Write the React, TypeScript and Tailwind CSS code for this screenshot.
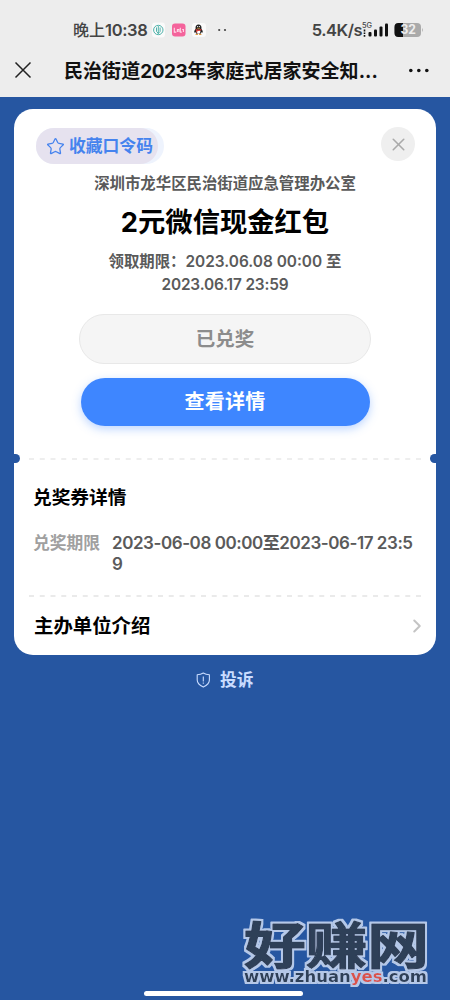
import { ChevronRight, Star, X } from 'lucide-react';

function StatusBar() {
  return (
    <div className="flex h-[60px] items-center pl-[73px] pr-[26px] text-[#444]">
      <span className="w-[75px] whitespace-nowrap text-base font-medium leading-[60px]">
        晚上<span className="text-[16.5px] font-semibold tracking-[-0.35px]">10:38</span>
      </span>
      <svg className="ml-1" width="54" height="16" viewBox="0 0 54 16">
        <rect x="0" y="0.5" width="13" height="15" rx="3" fill="#fafafa" />
        <circle cx="6.3" cy="8" r="4.7" fill="none" stroke="#4fb3ab" strokeWidth="1" />
        <path d="M6.3 4v8M4.5 5.5v4l1.8 1.8 1.8-1.8v-4" fill="none" stroke="#4fb3ab" strokeWidth="1" />
        <rect x="20" y="1.5" width="13.5" height="13" rx="3" fill="#f4639b" />
        <path d="M22.3 5.8v4.3h2M25.4 10.1V7.5h1.5v2.6M28.3 5.8v4.3h1.5M31.4 10.1V7.5h-1.2" fill="none" stroke="#ffd9e8" strokeWidth="1.1" />
        <rect x="40" y="1" width="14" height="14" rx="3" fill="#fafafa" />
        <ellipse cx="46.5" cy="6" rx="3" ry="3.5" fill="#222" />
        <path d="M43.5 7c-1.4 1.6-1.6 3.3-.8 3.7l.8-.6c.2 1 .6 1.4 1 1.7h4c.4-.3.8-.7 1-1.7l.8.6c.8-.4.6-2.1-.8-3.7z" fill="#222" />
        <ellipse cx="46.5" cy="9.7" rx="1.9" ry="2" fill="#fff" />
        <path d="M43.6 7.5q2.9 1.7 5.8 0M44.8 8v2.6" fill="none" stroke="#dc3b36" strokeWidth="1.2" />
        <path d="M43.6 12.4h2.4M47 12.4h2.4" stroke="#d98b2b" strokeWidth="1" />
        <path d="M45.2 6.3h2.6" stroke="#e7a03a" strokeWidth="0.8" />
        <circle cx="45.6" cy="4.6" r="0.6" fill="#fff" />
        <circle cx="47.4" cy="4.6" r="0.6" fill="#fff" />
      </svg>
      <svg className="ml-3" width="10" height="4" viewBox="0 0 10 4">
        <circle cx="1.2" cy="2" r="1.1" fill="#444" />
        <circle cx="7" cy="2" r="1.1" fill="#444" />
      </svg>
      <span className="ml-auto whitespace-nowrap text-[16.5px] font-semibold leading-[60px] tracking-[-0.5px]">5.4K/s</span>
      <svg width="28" height="16" viewBox="0 0 28 16">
        <text x="0" y="5.8" fontSize="7" fontWeight="500" fill="#444" textLength="10" lengthAdjust="spacingAndGlyphs">5G</text>
        <path d="M2.5 7.5v2M2.5 10.5v1.6M2.5 13v1.8" stroke="#111" strokeWidth="1.6" />
        <rect x="6.5" y="10" width="3" height="4.5" rx="1" fill="#111" />
        <rect x="12" y="7.5" width="3" height="7" rx="1" fill="#111" />
        <rect x="17.5" y="4.5" width="3" height="10" rx="1" fill="#111" />
        <rect x="23" y="1.5" width="3" height="13" rx="1" fill="#111" />
      </svg>
      <svg className="ml-1" width="30" height="16" viewBox="0 0 30 16">
        <rect x="0.5" y="1" width="26.5" height="14" rx="4" fill="#aaa" />
        <path d="M4.5 1H9v14H4.5a4 4 0 0 1-4-4V5a4 4 0 0 1 4-4z" fill="#111" />
        <path d="M28 5.7q1.8 2.3 0 4.6z" fill="#aaa" />
        <text x="6.5" y="12.4" fontSize="12.5" fontWeight="700" fill="#eee" textLength="15.5" lengthAdjust="spacingAndGlyphs">32</text>
      </svg>
    </div>
  );
}

function TitleBar() {
  return (
    <div className="flex h-[37px] items-center pb-[17px]">
      <svg className="ml-[14px] shrink-0" width="18" height="18" viewBox="0 0 18 18">
        <path d="M1.5 1.5l15 15M16.5 1.5l-15 15" stroke="#222" strokeWidth="1.5" />
      </svg>
      <h1 className="ml-8 w-[316px] whitespace-nowrap pt-[3px] text-[19px] font-bold leading-5 tracking-[0.05px] text-[#111]">
        民治街道<span className="tracking-[-0.5px]">2023</span>年家庭式居家安全知...
      </h1>
      <svg className="ml-[29px] shrink-0" width="21" height="5" viewBox="0 0 21 5">
        <circle cx="1.8" cy="2.5" r="1.8" fill="#111" />
        <circle cx="9.8" cy="2.5" r="1.8" fill="#111" />
        <circle cx="17.8" cy="2.5" r="1.8" fill="#111" />
      </svg>
    </div>
  );
}

function DashedLine({ color }: { color: string }) {
  return (
    <svg className="block" width="392" height="2" viewBox="0 0 392 2">
      <path d="M0 1h392" stroke={color} strokeWidth="1.4" strokeDasharray="5 5.75" />
    </svg>
  );
}

function Watermark() {
  return (
    <svg className="absolute bottom-0 right-0" width="220" height="110" viewBox="0 0 220 110">
      <defs>
        <filter id="outline" x="-5%" y="-10%" width="110%" height="120%">
          <feMorphology in="SourceAlpha" operator="dilate" radius="1.5" result="thick" />
          <feFlood floodColor="#b5c8e8" />
          <feComposite in2="thick" operator="in" result="edge" />
          <feMerge>
            <feMergeNode in="edge" />
            <feMergeNode in="SourceGraphic" />
          </feMerge>
        </filter>
      </defs>
      <text
        x="14"
        y="74"
        textLength="185"
        lengthAdjust="spacingAndGlyphs"
        fontFamily="Noto Sans CJK SC, sans-serif"
        fontSize="50"
        fontWeight="700"
        fill="#2e3f58"
        stroke="#2e3f58"
        strokeWidth="1.2"
        strokeLinejoin="round"
        filter="url(#outline)"
      >
        好赚网
      </text>
      <text
        x="14"
        y="91.5"
        textLength="183"
        lengthAdjust="spacingAndGlyphs"
        fontFamily="DejaVu Sans, sans-serif"
        fontSize="15"
        fontWeight="700"
        fill="#2e3f58"
        filter="url(#outline)"
      >
        www.zhuan<tspan fill="#d9534c">yes</tspan>.com
      </text>
    </svg>
  );
}

export default function App() {
  return (
    <div className="relative flex h-[1000px] w-[450px] flex-col overflow-hidden bg-[#2656a1] font-['Inter','Noto_Sans_CJK_SC',sans-serif]">
      <header className="h-[97px] shrink-0 bg-[#ededed]">
        <StatusBar />
        <TitleBar />
      </header>

      <main className="ml-[14px] mt-3 flex h-[546px] w-[422px] shrink-0 flex-col rounded-[19px] bg-white">
        <div className="flex h-[52px] items-end justify-between pl-[22px] pr-[21px]">
          <div className="mb-[-3px] h-9 w-32 rounded-full bg-[#eef3fd]">
            <div className="flex h-9 w-[122px] items-center rounded-full bg-[#e6e2ef] pl-[10px] text-[#4583ee]">
              <Star className="h-[19px] w-[19px] shrink-0" strokeWidth={1.6} />
              <span className="ml-1 whitespace-nowrap pt-px text-[16.8px] font-bold">收藏口令码</span>
            </div>
          </div>
          <button className="flex h-[34px] w-[34px] items-center justify-center rounded-full bg-[#efefef]">
            <X className="h-[21px] w-[21px] text-[#aaa]" strokeWidth={1.8} />
          </button>
        </div>

        {/* prize summary */}
        <div className="flex flex-col items-center">
          <p className="mt-[13px] h-5 text-[15.4px] font-semibold leading-5 text-[#5a5a5a]">深圳市龙华区民治街道应急管理办公室</p>
          <h2 className="mt-[11px] h-9 whitespace-nowrap text-[27.3px] font-bold leading-9 text-black">2元微信现金红包</h2>
          <p className="mt-[10px] h-[46px] whitespace-nowrap text-center text-[15.4px] font-semibold leading-[22.5px] text-[#5a5a5a]">
            领取期限：2023.06.08 00:00 至<br />
            <span className="tracking-[-0.15px]">2023.06.17 23:59</span>
          </p>
          <button className="mt-[17px] h-[50px] w-[292px] rounded-full border border-[#e8e8e8] bg-[#f5f5f5] pt-0.5 text-[19.5px] font-semibold text-[#8c8c8c]">
            已兑奖
          </button>
          <button className="mt-[14px] h-12 w-[289px] rounded-full bg-[#3e86ff] text-[20px] font-bold tracking-[0.3px] text-white shadow-[0_3px_10px_rgba(62,134,255,0.35)]">
            查看详情
          </button>
        </div>

        {/* ticket notches */}
        <div className="mt-[28px] flex h-[9px] items-center justify-between">
          <span className="h-[9px] w-1.5 rounded-r-full bg-[#2656a1]" />
          <DashedLine color="#e9e9e9" />
          <span className="h-[9px] w-1.5 rounded-l-full bg-[#2656a1]" />
        </div>

        <section className="px-[19px]">
          <h3 className="mt-[21px] h-7 text-[18.7px] font-bold leading-7 text-black">兑奖券详情</h3>
          <div className="mt-[20px] flex">
            <span className="w-[79px] shrink-0 pt-px text-[16.8px] font-semibold leading-[21px] text-[#a0a0a0]">兑奖期限</span>
            <p className="whitespace-nowrap pt-px text-[17px] font-semibold leading-[21px] tracking-[-0.44px] text-[#5a5a5a]">
              2023-06-08 00:00至2023-06-17 23:5<br />9
            </p>
          </div>
        </section>

        <div className="mt-5 flex justify-center">
          <DashedLine color="#e4e4e4" />
        </div>

        <div className="mt-[15px] flex h-7 items-center justify-between pl-5 pr-2">
          <h3 className="text-[19.4px] font-bold leading-7 text-black">主办单位介绍</h3>
          <ChevronRight className="h-[22px] w-[22px] text-[#c4c4c4]" strokeWidth={2.2} />
        </div>
      </main>

      <div className="mt-[14px] flex h-[22px] items-center pl-[196px] text-[#c9dcff]">
        <svg width="15" height="16" viewBox="0 0 15 16" fill="none" stroke="currentColor" strokeWidth="1.1" strokeLinejoin="round">
          <path d="M7.3 1C5.3 2.2 3.2 2.6 1.2 2.7v5.4c0 3.2 2.6 5.4 6.1 7 3.5-1.6 6.1-3.8 6.1-7V2.7C11.4 2.6 9.3 2.2 7.3 1z" />
          <path d="M7.3 4.5v5M7.3 10.6v1.2" />
        </svg>
        <span className="ml-[9px] text-[16.8px] font-bold leading-[22px]">投诉</span>
      </div>

      <Watermark />
      <div className="ml-36 mt-auto mb-1 h-[5px] w-[159px] shrink-0 rounded-full bg-white" />
    </div>
  );
}
